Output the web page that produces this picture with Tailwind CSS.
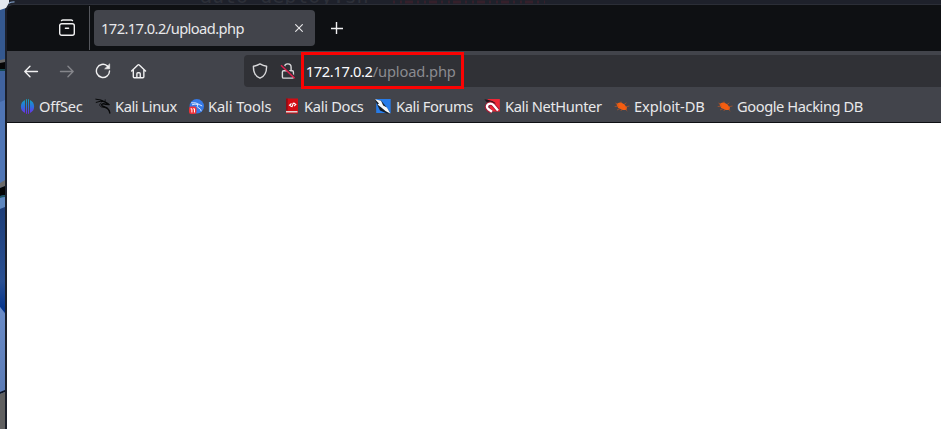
<!DOCTYPE html>
<html lang="en">
<head>
<meta charset="utf-8">
<title>172.17.0.2/upload.php</title>
<script src="https://cdn.jsdelivr.net/npm/@tailwindcss/browser@4"></script>
</head>
<body class="w-[941px] h-[429px] overflow-hidden bg-[#1e212b] font-['Noto_Sans',sans-serif] text-[14.67px] text-[#e8e8ea]">
<div class="flex h-[429px] relative">
  <!-- desktop wallpaper beside the window -->
  <svg class="w-[5px] h-full shrink-0" viewBox="0 0 5 429" preserveAspectRatio="none">
    <defs>
    <linearGradient id="w2" x1="0" y1="0" x2="0" y2="1"><stop offset="0" stop-color="#1d3d78"/><stop offset=".7" stop-color="#2a5092"/><stop offset="1" stop-color="#00318c"/></linearGradient>
    <linearGradient id="w3" x1="0" y1="0" x2="0" y2="1"><stop offset="0" stop-color="#6a8cc8"/><stop offset="1" stop-color="#5b7bb5"/></linearGradient></defs>
    <rect width="5" height="429" fill="#4f75b5"/>
    <path d="M0 0h5v60H0z" fill="#34588f"/>
    <path d="M0 70h5v30l-5 2z" fill="#40639f"/>
    <path d="M0 60l5-1v4l-5 1z" fill="#666"/><path d="M0 63l5-1v7H0z" fill="#060606"/>
    <path d="M0 69h5v2H0z" fill="#16474f"/>
    <path d="M0 183l5-3v6l-5 2z" fill="#6b6b6b"/><path d="M0 188l5-2v9l-5 1z" fill="#040506"/>
    <path d="M0 196l5-1v2l-5 1z" fill="#1a5560"/>
    <path d="M0 198l5-1v10l-5 2z" fill="#5e87bf"/>
    <path d="M0 209l5-2v106l-5-6z" fill="url(#w2)"/>
    <path d="M0 307l5 7v77l-5 3z" fill="url(#w3)"/>
    <path d="M0 392l5-2v2l-5 2z" fill="#0c1425"/><path d="M0 394l5-2v37H0z" fill="#606060"/>
  </svg>
  <div class="w-[936px] flex flex-col">
    <div class="h-[4px] shrink-0 bg-[#1e212b] overflow-hidden flex pl-[195px] font-['DejaVu_Sans_Mono',monospace] text-[20px] text-[#2d3039] whitespace-pre"><span class="leading-none -mt-[14px]">auto_deploy.sh</span>
      <svg class="w-[152px] h-1 ml-6 shrink-0" viewBox="0 0 152 4"><path d="M0 2h152" stroke="#35202b" stroke-width="3" stroke-dasharray="2 5 2 3 8 4"/></svg>
    </div>
    <!-- browser window -->
    <div class="flex-1 flex flex-col bg-[#0e1013] border-l-2 border-t border-l-[#1b1f29] border-t-[#2b2e37] rounded-tl-[8px] overflow-hidden">
      <div class="h-[46px] shrink-0 flex items-start">
        <div class="w-[83px] h-[44px] mt-px border-r border-[#55575d] flex items-center pl-[51px]">
          <svg class="w-[18px] h-[18px]" viewBox="0 0 18 18" fill="none" stroke="#f0f0f1" stroke-width="1.4" stroke-linecap="round" stroke-linejoin="round"><path d="M3.5 1.6Q4 1 5 1h8q1 0 1.5.6M3.7 4.7h10.6a2 2 0 0 1 2 2v7.6a2 2 0 0 1-2 2H3.7a2 2 0 0 1-2-2V6.7a2 2 0 0 1 2-2zM7.4 9.3h3.2"/></svg>
        </div>
        <div class="ml-1 mt-[5px] w-[221px] h-[36px] rounded bg-[#42444b] flex items-center pl-[7px]">
          <span class="w-[194px] leading-5 tracking-[-0.57px]">172.17.0.2/upload.php</span>
          <svg class="w-[8px] h-[8px]" viewBox="0 0 8 8" stroke="#e8e8ea" stroke-width="1.1"><path d="M.3.3l7.4 7.4M7.7.3L.3 7.7"/></svg>
        </div>
        <svg class="w-3 h-3 ml-4 mt-[17px]" viewBox="0 0 12 12" stroke="#f0f0f1" stroke-width="1.4"><path d="M5.5 0v12M0 6.5h12"/></svg>
      </div>
      <div class="h-[71px] shrink-0 bg-[#42444b]">
        <div class="h-[40px] flex items-center pl-4">
          <svg class="w-4 h-4 mt-px" viewBox="0 0 16 16" fill="none" stroke="#f0f0f1" stroke-width="1.4" stroke-linecap="round" stroke-linejoin="round"><path d="M14.5 7.5H1.8M7 2.3L1.8 7.5 7 12.7"/></svg>
          <svg class="w-4 h-4 ml-5 mt-px" viewBox="0 0 16 16" fill="none" stroke="#85868b" stroke-width="1.4" stroke-linecap="round" stroke-linejoin="round"><path d="M1.5 7.5h12.7M9 2.3l5.2 5.2L9 12.7"/></svg>
          <svg class="w-4 h-4 ml-5" viewBox="0 0 16 16" fill="none" stroke="#f0f0f1" stroke-width="1.4" stroke-linecap="round"><path d="M14.6 8A6.6 6.6 0 1 1 12.2 2.8l1 1.2"/><path d="M14.7 1.2v4.6h-4.6z" fill="#f0f0f1" stroke-width=".7" stroke-linejoin="round"/></svg>
          <svg class="w-4 h-4 ml-5" viewBox="0 0 16 16" fill="none" stroke="#f0f0f1" stroke-width="1.4" stroke-linecap="round" stroke-linejoin="round"><path d="M.6 8l6.3-6.1q.7-.6 1.4 0L14.6 8M2.3 6.8v7q0 1 1 1h8.6q1 0 1-1v-7M5.9 14.6v-3.8q0-1 1-1h1.4q1 0 1 1v3.8"/></svg>
          <div class="ml-[97px] w-[700px] h-[32px] bg-[#303136] rounded-l flex items-center pl-2">
            <svg class="w-4 h-4" viewBox="0 0 16 16" fill="none" stroke="#d8d8da" stroke-width="1.4" stroke-linejoin="round"><path d="M8 .9Q11 2.8 14.6 3.3C14.7 9 12.5 13.4 8 15.2 3.5 13.4 1.3 9 1.4 3.3Q5 2.8 8 .9z"/></svg>
            <svg class="w-4 h-4 ml-3" viewBox="0 0 16 16" fill="none" stroke="#d8d8da" stroke-width="1.4"><path d="M4.5 5V4.2a3.3 3.3 0 0 1 6.6 0v3M4 7.7h8.2q1.2 0 1.2 1.2v5q0 1.2-1.2 1.2H3.6q-1.2 0-1.2-1.2v-5q0-1.2 1.2-1.2z"/><path d="M1.9 1.8l13.2 12.6" stroke="#303136" stroke-width="2"/><path d="M1 2.2l13.6 13" stroke="#e2214f" stroke-width="1.5"/></svg>
            <span class="ml-[10px] leading-5 text-[#fbfbfe] tracking-[-0.36px]">172.17.0.2<span class="text-[#8b8b90] tracking-[-0.12px]">/upload.php</span></span>
          </div>
        </div>
        <div class="h-[31px] flex items-start pl-[13px] pt-[5px] leading-5 whitespace-nowrap">
          <div class="w-[75px] flex items-center gap-[4px]"><svg class="w-[15px] h-[15px] shrink-0" viewBox="0 0 15 15"><defs><linearGradient id="o" gradientUnits="userSpaceOnUse" x1="0" y1="0" x2="0" y2="15"><stop offset="0" stop-color="#10a6bd"/><stop offset=".5" stop-color="#2c70df"/><stop offset="1" stop-color="#7428e8"/></linearGradient></defs><path fill="url(#o)" d="M5 1v13A7.2 7.2 0 0 1 5 1zM6 .3h1v14.4H6zM8 .3h1v14.4H8zM10 1a7.2 7.2 0 0 1 0 13z"/><path d="M5 0h1v15H5zM7 0h1v15H7zM9 0h1v15H9z" fill="#42444b"/></svg><span class="tracking-[-0.2px]">OffSec</span></div>
          <div class="w-[94px] flex items-center gap-[4px]"><svg class="w-4 h-4 shrink-0" viewBox="0 0 16 16" fill="none" stroke="#070809" stroke-linecap="round" stroke-linejoin="round"><path d="M.8 1.2L6 2l3 1.6M1.2 4.4l4-1.1 3.7.3" stroke-width="1"/><path d="M6 2.7l3.8 1.1 1.8 1 2.5 1.7-3.3-.2C7.6 5 5.2 6.5 7.6 8.2 10 9.6 14 8.8 14.8 15" stroke-width="1.4"/><path d="M6.2 4.5C3 7 5.3 9.6 9 9.2l3.3 1M10 3.5l.2-1.7" stroke-width=".8"/></svg><span class="tracking-[-0.42px]">Kali Linux</span></div>
          <div class="w-[96px] flex items-center gap-[4px]"><svg class="w-[15px] h-[15px] shrink-0" viewBox="0 0 15 15"><circle cx="7.8" cy="7.3" r="7.2" fill="#3479e7"/><path d="M2.2 3.8q5-.7 8 1.7l3 1.5M3 5.8q3-1.3 6-.2Q6.7 8 10 9.2q2 .8 2.2 3" fill="none" stroke="#d9e7ff" stroke-width="1"/><rect y="7.5" width="7.5" height="7.5" rx="2" fill="#ed3138"/><path d="M1.6 9.8h1.3v3.7M4.2 9.8h1.3v3.7" fill="none" stroke="#fff" stroke-width="1"/></svg><span class="tracking-[-0.1px]">Kali Tools</span></div>
          <div class="w-[90px] flex items-center gap-[4px]"><svg class="w-[15px] h-4 shrink-0" viewBox="0 0 15 16"><path d="M1 .5h12v15H1z" fill="#d20c14"/><path d="M1 .5h1.7v12H1z" fill="#8b0e16"/><path d="M1 13h11.5v1.6H1z" fill="#ddd6d5"/><path d="M6.5 5.5l-2 1.8 2 1.3M8.5 4.8l2.3 1.8L9 8.1M8.3 4.8L6.9 9.2" stroke="#fff" stroke-width="1.1" fill="none"/></svg><span class="tracking-[-0.3px]">Kali Docs</span></div>
          <div class="w-[109px] flex items-center gap-[4px]"><svg class="w-4 h-4 shrink-0" viewBox="0 0 16 16"><path d="M1.2 1h14.5v14H1.2z" fill="#277ce9"/><path d="M0 2l6 .6 5 5.9 4.5 7H12L5 12.5z" fill="#17202a"/><path d="M0 1.2l6 1.6 2.2 4.6 3.7 2 3.6 6.3-5-2.6-4.2-3.6L2.5 6.6 4 5.5z" fill="#f6f8fa"/></svg><span class="tracking-[-0.36px] pl-px">Kali Forums</span></div>
          <div class="w-[129px] flex items-center gap-[5px]"><svg class="w-4 h-4 shrink-0" viewBox="0 0 16 16"><path d="M3.5 1h12.3v12.5H7z" fill="#ee2636"/><path d="M.3 1.3l4.5.8 4 1.2 3 2-4 1-5-2z" fill="#25151b"/><path d="M14 12.4l-4.2-5Q7 4.4 4 6.4 1.5 9 4 11.4l3.8 2.7" fill="none" stroke="#a91b35" stroke-width="4"/><path d="M14 12.4l-4.2-5Q7 4.4 4 6.4 1.8 8.8 4.2 11l3.8 2.7" fill="none" stroke="#fff" stroke-width="2.3"/></svg><span class="tracking-[-0.38px]">Kali NetHunter</span></div>
          <div class="w-[103px] flex items-center gap-[4px]"><svg class="w-4 h-4 ml-px shrink-0" viewBox="0 0 16 16"><path d="M2.5 6.5Q4 4 7 4.5l3.2 1.8L13 9.5l-.7 2.6-3.7-.2L4.2 9.9z" fill="#f45d10"/><path d="M1.5 5l2.8 1.3M.7 8.5l4-.4M3 12L6.2 10.5M7.2 5.2L7 3.5M10 6.5l2.4-1.7M11.5 8.8l4-.8M8 11l-1.2 2M11.5 11.3l1.8 1.7" stroke="#ad542a" stroke-width=".8"/></svg><span class="tracking-[-0.08px]">Exploit-DB</span></div>
          <div class="flex items-center gap-[4px]"><svg class="w-4 h-4 ml-px shrink-0" viewBox="0 0 16 16"><path d="M2.5 6.5Q4 4 7 4.5l3.2 1.8L13 9.5l-.7 2.6-3.7-.2L4.2 9.9z" fill="#f45d10"/><path d="M1.5 5l2.8 1.3M.7 8.5l4-.4M3 12L6.2 10.5M7.2 5.2L7 3.5M10 6.5l2.4-1.7M11.5 8.8l4-.8M8 11l-1.2 2M11.5 11.3l1.8 1.7" stroke="#ad542a" stroke-width=".8"/></svg><span class="tracking-[-0.42px]">Google Hacking DB</span></div>
        </div>
      </div>
      <div class="flex-1 bg-white border-t border-[#0e1013]"></div>
    </div>
  </div>
  <!-- wallpaper showing past the rounded window corner -->
  <svg class="absolute left-0 top-0 w-4 h-[10px]" viewBox="0 0 16 10"><path d="M0 0h9v3L6 8 0 10z" fill="#e3e8ef"/><path d="M9 3.5Q10 1.8 14.5 1.8" stroke="#7d9cc4" stroke-width="1.3" fill="none"/></svg>
  <!-- highlight around the address -->
  <div class="absolute left-[301px] top-[52px] w-[163px] h-[37px] border-[3px] border-[#fa0303]"></div>
</div>
</body>
</html>
